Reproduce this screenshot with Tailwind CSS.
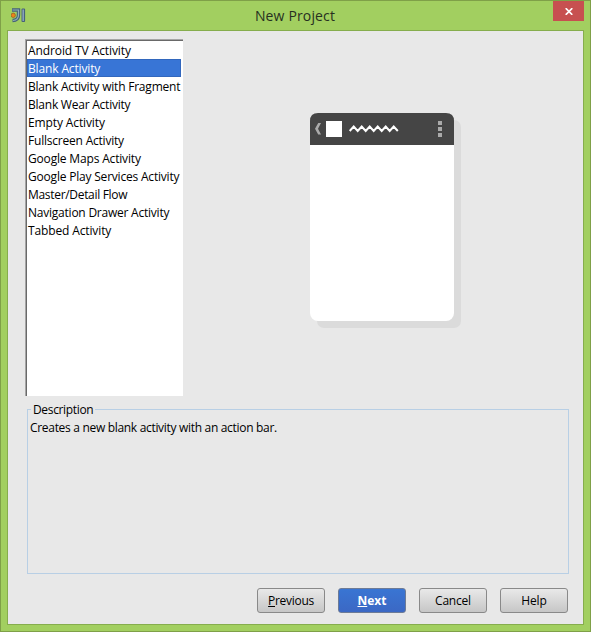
<!DOCTYPE html>
<html lang="en">
<head>
<meta charset="utf-8">
<title>New Project</title>
<script src="https://cdn.jsdelivr.net/npm/@tailwindcss/browser@4"></script>
</head>
<body class="overflow-hidden font-['Open_Sans','Noto_Sans',sans-serif] text-[12px] leading-[18px] text-black">
<div class="flex h-[632px] w-[591px] flex-col border border-[#7fa048] bg-[#a2cf60] px-[6px] pb-[6px]">
  <header class="flex h-[29px] shrink-0 items-start">
    <svg class="mt-[7px] ml-[4px] h-[15px] w-[15px] shrink-0" viewBox="0 0 15 15" fill="none">
      <path d="M1 2H7.5V7Q7.5 12.5 1.5 12.5" stroke="#46627a" stroke-width="3.4"/>
      <path d="M1.5 2H7.5V7Q7.5 12 2 12.5" stroke="#8fb0b8" stroke-width="1.2"/>
      <rect x="10.5" y=".5" width="3.6" height="13.5" rx="1" fill="#46627a"/>
      <path d="M12.2 1.5V13" stroke="#8fa9c0" stroke-width="1.4"/>
      <circle cx="2.2" cy="7.3" r="2.2" fill="#ee8319" stroke="#8b5b28" stroke-width=".7"/>
    </svg>
    <h1 class="flex-1 pt-[3px] pl-[11px] text-center text-[14px] leading-[24px] font-normal tracking-[0.15px] text-[#272f20]">New Project</h1>
    <button class="flex h-[20px] w-[31px] items-center justify-center bg-[#c75050]" aria-label="Close">
      <svg class="mt-[1px] h-[7px] w-[8px]" viewBox="0 0 8 7"><path d="M.7 .2L7.3 6.8M7.3 .2L.7 6.8" stroke="#fff" stroke-width="1.7"/></svg>
    </button>
  </header>
  <main class="flex flex-1 flex-col border border-[#86ad4d] bg-[#e8e8e8] pt-[8px] pr-[14px] pl-[17px]">
    <section class="flex h-[357px] shrink-0">
      <div class="h-[357px] w-[158px] shrink-0 border-t border-l border-[#a5a5a5]">
        <ul class="h-[356px] border-t border-l border-[#696969] bg-white whitespace-nowrap">
          <li class="h-[18px] pt-px pl-px tracking-[-0.1px]">Android TV Activity</li>
          <li class="mr-[2px] h-[18px] border border-[#3267bd] bg-[#3875d6] tracking-[-0.14px] text-white">Blank Activity</li>
          <li class="h-[18px] pt-px pl-px tracking-[-0.21px]">Blank Activity with Fragment</li>
          <li class="h-[18px] pt-px pl-px tracking-[-0.23px]">Blank Wear Activity</li>
          <li class="h-[18px] pt-px pl-px tracking-[-0.12px]">Empty Activity</li>
          <li class="h-[18px] pt-px pl-px tracking-[-0.21px]">Fullscreen Activity</li>
          <li class="h-[18px] pt-px pl-px tracking-[-0.17px]">Google Maps Activity</li>
          <li class="h-[18px] pt-px pl-px tracking-[-0.2px]">Google Play Services Activity</li>
          <li class="h-[18px] pt-px pl-px tracking-[-0.31px]">Master/Detail Flow</li>
          <li class="h-[18px] pt-px pl-px tracking-[-0.23px]">Navigation Drawer Activity</li>
          <li class="h-[18px] pt-px pl-px tracking-[-0.13px]">Tabbed Activity</li>
        </ul>
      </div>
      <svg class="mt-[74px] ml-[127px] h-[215px] w-[151px]" viewBox="0 0 151 215" fill="none">
        <rect x="7" y="7" width="144" height="208" rx="7" fill="#dbdbdb"/>
        <rect width="144" height="208" rx="8" fill="#fff"/>
        <path d="M0 32V8Q0 0 8 0H136Q144 0 144 8V32Z" fill="#454545"/>
        <path d="M11 10H8.2L5 15.7L8.2 21.4H11L8 15.7Z" fill="#aaa"/>
        <path d="M16 8h16v16H16z" fill="#fff"/>
        <path d="M39.7 18L43.7 13.5L47.7 18L51.7 13.5L55.7 18L59.7 13.5L63.7 18L67.7 13.5L71.7 18L75.7 13.5L79.7 18L83.7 13.5L87.8 18" stroke="#fff" stroke-width="2"/>
        <path d="M128 8h4v4h-4zM128 14h4v4h-4zM128 20h4v4h-4z" fill="#aaa"/>
      </svg>
    </section>
    <section class="relative mt-[13px] ml-[2px] h-[165px] w-[542px] shrink-0 border border-[#b8cfe5] pt-[9px] pl-[2px]">
      <h2 class="absolute top-[-9px] left-[3px] h-[14px] bg-[#e8e8e8] px-[2px] font-normal tracking-[-0.34px]">Description</h2>
      <p class="tracking-[-0.31px]">Creates a new blank activity with an action bar.</p>
    </section>
    <footer class="mt-[14px] mr-px flex justify-end gap-[13px]">
      <button class="h-[25px] w-[68px] rounded-[3px] border border-[#898989] bg-linear-to-b from-[#e9e9e9] to-[#c6c6c6] tracking-[-0.3px]"><u>P</u>revious</button>
      <button class="h-[25px] w-[68px] rounded-[3px] border border-[#6d7b96] bg-linear-to-b from-[#3975d3] to-[#3b68c4] font-bold text-white"><u>N</u>ext</button>
      <button class="h-[25px] w-[68px] rounded-[3px] border border-[#898989] bg-linear-to-b from-[#e9e9e9] to-[#c6c6c6] tracking-[-0.2px]">Cancel</button>
      <button class="h-[25px] w-[68px] rounded-[3px] border border-[#898989] bg-linear-to-b from-[#e9e9e9] to-[#c6c6c6] tracking-[-0.1px]">Help</button>
    </footer>
  </main>
</div>
</body>
</html>
